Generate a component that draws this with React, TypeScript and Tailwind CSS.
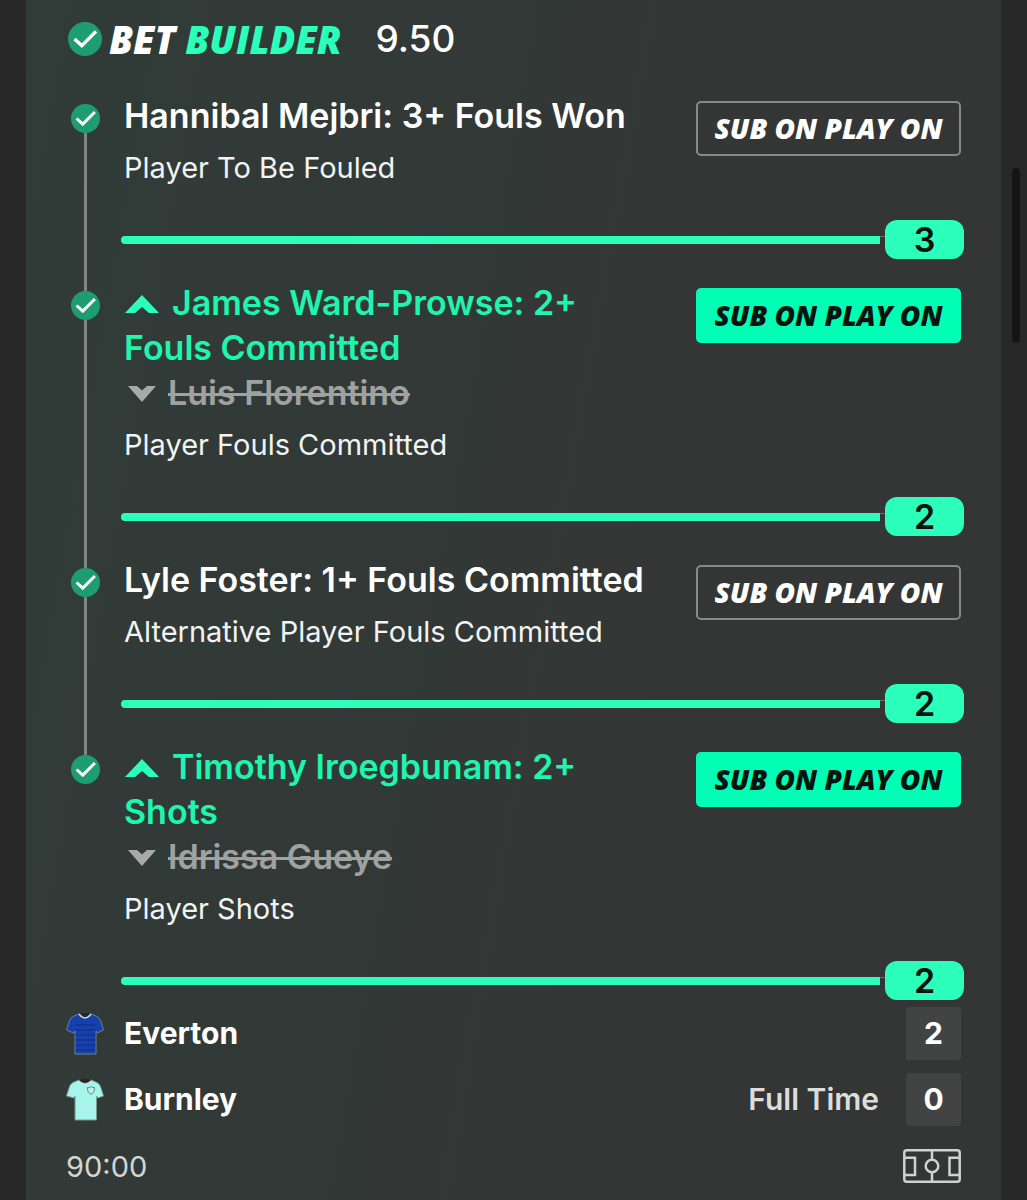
import React from 'react';
import clsx from 'clsx';

interface Leg {
  player: string;
  market: string;
  replaced?: string;
  count: number;
}

const legs: Leg[] = [
  { player: 'Hannibal Mejbri: 3+ Fouls Won', market: 'Player To Be Fouled', count: 3 },
  { player: 'James Ward-Prowse: 2+ Fouls Committed', replaced: 'Luis Florentino', market: 'Player Fouls Committed', count: 2 },
  { player: 'Lyle Foster: 1+ Fouls Committed', market: 'Alternative Player Fouls Committed', count: 2 },
  { player: 'Timothy Iroegbunam: 2+ Shots', replaced: 'Idrissa Gueye', market: 'Player Shots', count: 2 },
];

const CheckCircle = ({ className }: { className: string }) => (
  <svg viewBox="0 0 34 34" className={clsx('shrink-0', className)} aria-hidden="true">
    <circle cx="17" cy="17" r="17" fill="#1f9d72" />
    <path d="M6.5 17 L13.8 23.6 L28 9.4" fill="none" stroke="#fff" strokeWidth="3.4" />
  </svg>
);

const HomeShirt = () => (
  <svg viewBox="0 0 38 44" className="h-11 w-[38px] shrink-0" aria-hidden="true">
    <path d="M13 2 L7 4.5 Q4 6 3 10 L0.5 18 L7.500 21 L9 19 V42 H30 V19 L31.500 21 L37.500 18 L35 10 Q34 6 31 4.500 L25 2 Q19 9 13 2Z" fill="#1740ad" stroke="#6f7f9c" strokeWidth="1" />
    <path d="M9.500 13H29.500M9.500 18H29.500M9.500 23H29.500M9.500 28H29.500M9.500 33H29.500M9.500 38H29.500" stroke="#0f2c80" strokeWidth="1" />
    <path d="M13 2 Q19 0 25 2 Q19 9 13 2Z" fill="#23282c" />
    <path d="M13 2 Q19 10 25 2" fill="none" stroke="#d5d9de" strokeWidth="1.500" />
  </svg>
);

const AwayShirt = () => (
  <svg viewBox="0 0 38 44" className="h-11 w-[38px] shrink-0" aria-hidden="true">
    <path d="M13 2 L7 4.500 Q4 6 3 10 L0.500 18 L8 20 L9 18 V42 H30.500 V18 L31.500 20 L37.500 18 L35 10 Q34 6 31 4.500 L25 2 Q19 8 13 2Z" fill="#a5f5ea" stroke="#7f9693" strokeWidth="1" />
    <path d="M13 2 Q19 0 25 2 Q19 8 13 2Z" fill="#3a1c20" />
    <path d="M21.500 9.500 Q24 10 25 8.500 Q26 10 28.500 9.500 Q29.500 14 25 16.500 Q20.500 14 21.500 9.500Z" fill="#b9f3ec" stroke="#65827f" strokeWidth="1" />
    <path d="M10.500 26H21" stroke="#cfeae6" strokeWidth="1.500" />
  </svg>
);

const PitchIcon = () => (
  <svg viewBox="0 0 58 34" className="h-[34px] w-[58px]" fill="none" stroke="#d0d1d1" strokeWidth="2.500" aria-hidden="true">
    <rect x="1.300" y="1.300" width="55.400" height="31.400" rx="2.500" />
    <path d="M29 1 V11 M29 23 V33 M1 8.800 H12 V26 H1 M57 8.800 H46.500 V26 H57" />
    <circle cx="29" cy="17" r="6.300" />
  </svg>
);

const LegRow = ({ leg, first, last }: { leg: Leg; first: boolean; last: boolean }) => (
  <li className="flex gap-[19px]">
    <div className="flex w-[39px] shrink-0 flex-col items-center">
      <div className={clsx('h-[11px] w-[3px]', !first && 'bg-[#7f8684]')} />
      <CheckCircle className="size-[29px]" />
      {!last && <div className="w-[3px] flex-1 bg-[#7f8684]" />}
    </div>
    <div className="min-w-0 flex-1 pb-[21px]">
      <div className="flex items-start justify-between gap-7">
        <div className="min-w-0 flex-1">
          <h2 className={clsx('text-[34px] leading-[45px] font-semibold', leg.replaced ? 'text-[#1ff5ae]' : 'text-white')}>
            {leg.replaced && (
              <svg viewBox="0 0 36 20" className="mr-3 inline-block h-5 w-9 align-baseline" aria-hidden="true">
                <path d="M1 18 L18 0 L35 18 H25 L18 12 L11 18Z" fill="#2bffba" />
              </svg>
            )}
            {leg.player}
          </h2>
          {leg.replaced && (
            <p className="text-[34px] leading-[45px] font-semibold text-[#a0a2a1]">
              <svg viewBox="0 0 36 20" className="mr-2 inline-block h-5 w-9 align-baseline" aria-hidden="true">
                <path d="M4 1 H13 L18 5.500 L23 1 H32 L18 17Z" fill="#a8aaa9" />
              </svg>
              <s className="decoration-[3px]">{leg.replaced}</s>
            </p>
          )}
          <p className="mt-3 text-[29px] leading-9 text-[#f2f3f3]">{leg.market}</p>
        </div>
        <button
          type="button"
          className={clsx(
            'mt-2 h-[55px] w-[265px] shrink-0 rounded-[5px] pb-[2px] font-["Open_Sans",sans-serif] text-[28px] leading-none font-extrabold whitespace-nowrap italic',
            leg.replaced ? 'bg-[#00ffb4] text-[#04140e]' : 'border-2 border-[#878a89] text-white',
          )}
        >
          SUB ON PLAY ON
        </button>
      </div>
      <div className="-mx-[3px] mt-[34px] flex h-[39px] items-center">
        <div className="h-2 flex-1 rounded-l-full bg-[#2bffba]" />
        <div className="h-2 w-[5px] border-t border-[#6b706e]" />
        <div className="flex h-[39px] w-[79px] items-center justify-center rounded-xl bg-[#2bffba] text-[34px] leading-none font-semibold text-[#06120e]">
          {leg.count}
        </div>
      </div>
    </div>
  </li>
);

const Score = ({ value }: { value: number }) => (
  <span className="flex h-[53px] w-[55px] items-center justify-center rounded-[3px] bg-[#424443] text-[30px] font-bold text-white">
    {value}
  </span>
);

const App: React.FC = () => {
  return (
    <div className="relative min-h-screen bg-[#282828] px-[26px] font-[Inter,sans-serif]">
      <main className="min-h-screen bg-linear-[100deg,#303c38_0%,#323937_35%,#343635_65%,#343635_100%] px-10">
        <header className="flex h-[93px] items-start pt-[19px]">
          <div className="flex h-10 items-center">
            <CheckCircle className="mr-[7px] ml-[2px] size-[34px]" />
            <h1 className="font-['Open_Sans',sans-serif] text-[38px] leading-10 font-extrabold whitespace-nowrap text-white italic">
              BET <span className="text-[#2bffba]">BUILDER</span>
            </h1>
            <span className="ml-[34px] text-[37px] leading-10 font-medium text-white">9.50</span>
          </div>
        </header>

        <ul>
          {legs.map((leg, i) => (
            <LegRow key={leg.player} leg={leg} first={i === 0} last={i === legs.length - 1} />
          ))}
        </ul>

        <section className="-mt-[14px] flex flex-col gap-[13px]">
          <div className="flex items-center">
            <HomeShirt />
            <span className="ml-5 flex-1 text-[30px] font-bold text-white">Everton</span>
            <Score value={2} />
          </div>
          <div className="flex items-center">
            <AwayShirt />
            <span className="ml-5 flex-1 text-[30px] font-bold text-white">Burnley</span>
            <span className="mr-[27px] text-[30px] font-semibold text-[#dcdddd]">Full Time</span>
            <Score value={0} />
          </div>
        </section>

        <footer className="mt-[23px] flex h-[34px] items-center justify-between">
          <span className="text-[29px] leading-none text-[#d4d6d5]">90:00</span>
          <button type="button" aria-label="Match pitch">
            <PitchIcon />
          </button>
        </footer>
      </main>
      <div className="absolute top-[168px] right-[7px] h-[175px] w-2 rounded-full bg-[#151515]" />
    </div>
  );
};

export default App;
